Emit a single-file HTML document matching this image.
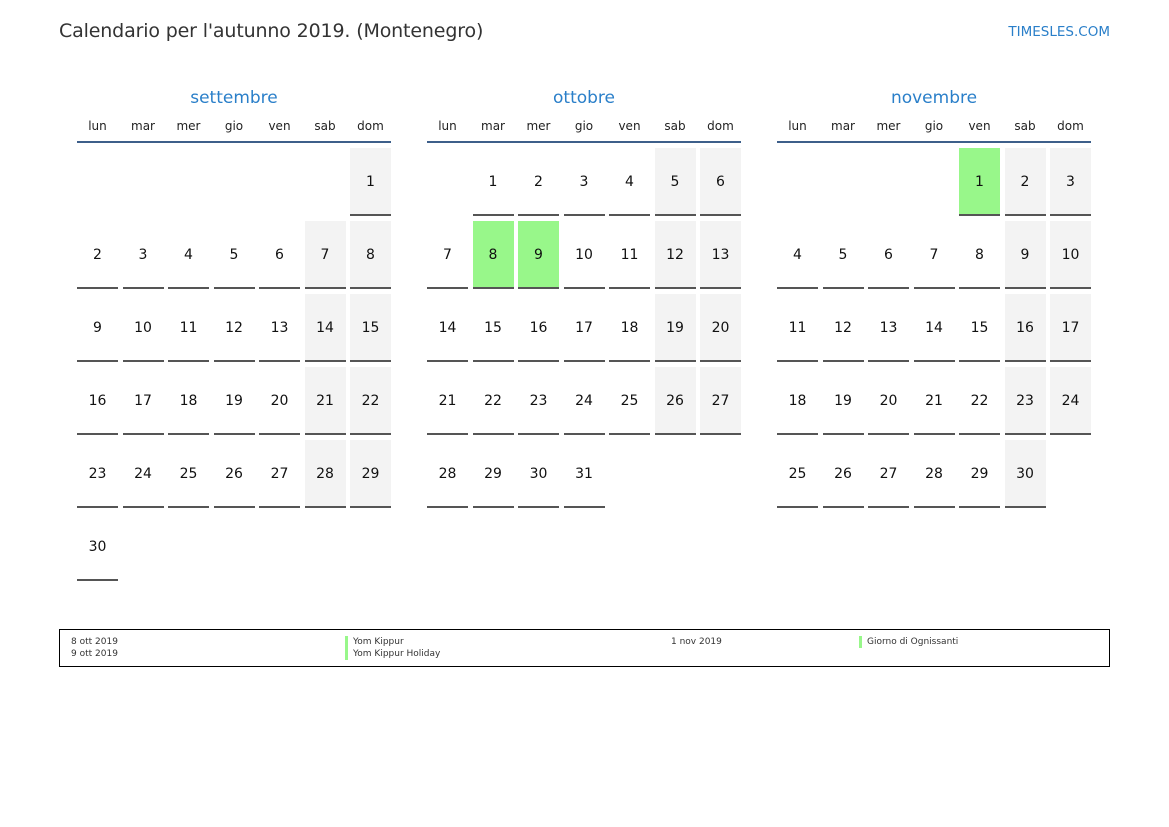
<!DOCTYPE html>
<html><head><meta charset="utf-8"><style>
body{margin:0;width:1169px;height:827px;background:#fff;font-family:"DejaVu Sans","Liberation Sans",sans-serif;position:relative;overflow:hidden}
.t{position:absolute;left:59px;top:20px;font-size:19px;letter-spacing:-0.15px;color:#333}
.brand{position:absolute;right:59px;top:24px;font-size:13.5px;color:#2a7fc9}
.m{position:absolute;top:88px;width:314px}
.mt{text-align:center;font-size:17px;color:#2a7fc9;height:21px}
.dn{display:grid;grid-template-columns:repeat(7,41px);column-gap:4.5px;font-size:12px;color:#222;text-align:center;margin-top:10px;height:22px;border-bottom:2px solid #3d5f8a}
.g{display:grid;grid-template-columns:repeat(7,41px);column-gap:4.5px;grid-auto-rows:68px;row-gap:5px;margin-top:5px}
.g div{font-size:14px;color:#111;display:flex;align-items:center;justify-content:center;box-sizing:border-box;padding-top:2px}
.g div.d{border-bottom:2px solid #555}
.g div.w{background:#f3f3f3}
.g div.h{background:#98f78a}
.f{position:absolute;left:59px;top:629px;width:1049px;height:36px;border:1px solid #000;font-size:9px;color:#333}
.f span{position:absolute;line-height:12px}
.b{border-left:3px solid #98f78a;padding-left:5px}
</style></head><body>
<div class="t">Calendario per l'autunno 2019. (Montenegro)</div>
<div class="brand">TIMESLES.COM</div>

<div class="m" style="left:77px">
<div class="mt">settembre</div>
<div class="dn"><span>lun</span><span>mar</span><span>mer</span><span>gio</span><span>ven</span><span>sab</span><span>dom</span></div>
<div class="g">
<div></div><div></div><div></div><div></div><div></div><div></div><div class="d w">1</div>
<div class="d">2</div><div class="d">3</div><div class="d">4</div><div class="d">5</div><div class="d">6</div><div class="d w">7</div><div class="d w">8</div>
<div class="d">9</div><div class="d">10</div><div class="d">11</div><div class="d">12</div><div class="d">13</div><div class="d w">14</div><div class="d w">15</div>
<div class="d">16</div><div class="d">17</div><div class="d">18</div><div class="d">19</div><div class="d">20</div><div class="d w">21</div><div class="d w">22</div>
<div class="d">23</div><div class="d">24</div><div class="d">25</div><div class="d">26</div><div class="d">27</div><div class="d w">28</div><div class="d w">29</div>
<div class="d">30</div>
</div></div>

<div class="m" style="left:427px">
<div class="mt">ottobre</div>
<div class="dn"><span>lun</span><span>mar</span><span>mer</span><span>gio</span><span>ven</span><span>sab</span><span>dom</span></div>
<div class="g">
<div></div><div class="d">1</div><div class="d">2</div><div class="d">3</div><div class="d">4</div><div class="d w">5</div><div class="d w">6</div>
<div class="d">7</div><div class="d h">8</div><div class="d h">9</div><div class="d">10</div><div class="d">11</div><div class="d w">12</div><div class="d w">13</div>
<div class="d">14</div><div class="d">15</div><div class="d">16</div><div class="d">17</div><div class="d">18</div><div class="d w">19</div><div class="d w">20</div>
<div class="d">21</div><div class="d">22</div><div class="d">23</div><div class="d">24</div><div class="d">25</div><div class="d w">26</div><div class="d w">27</div>
<div class="d">28</div><div class="d">29</div><div class="d">30</div><div class="d">31</div>
</div></div>

<div class="m" style="left:777px">
<div class="mt">novembre</div>
<div class="dn"><span>lun</span><span>mar</span><span>mer</span><span>gio</span><span>ven</span><span>sab</span><span>dom</span></div>
<div class="g">
<div></div><div></div><div></div><div></div><div class="d h">1</div><div class="d w">2</div><div class="d w">3</div>
<div class="d">4</div><div class="d">5</div><div class="d">6</div><div class="d">7</div><div class="d">8</div><div class="d w">9</div><div class="d w">10</div>
<div class="d">11</div><div class="d">12</div><div class="d">13</div><div class="d">14</div><div class="d">15</div><div class="d w">16</div><div class="d w">17</div>
<div class="d">18</div><div class="d">19</div><div class="d">20</div><div class="d">21</div><div class="d">22</div><div class="d w">23</div><div class="d w">24</div>
<div class="d">25</div><div class="d">26</div><div class="d">27</div><div class="d">28</div><div class="d">29</div><div class="d w">30</div>
</div></div>

<div class="f">
<span style="left:11px;top:6px">8 ott 2019</span>
<span style="left:11px;top:18px">9 ott 2019</span>
<span class="b" style="left:285px;top:6px">Yom Kippur</span>
<span class="b" style="left:285px;top:18px">Yom Kippur Holiday</span>
<span style="left:611px;top:6px">1 nov 2019</span>
<span class="b" style="left:799px;top:6px">Giorno di Ognissanti</span>
</div>
</body></html>
